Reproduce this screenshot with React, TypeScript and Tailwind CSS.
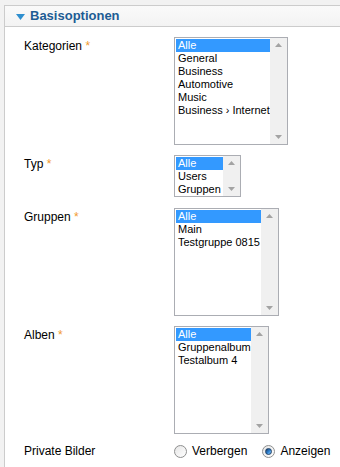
import React from 'react';

type ListProps = {
  items: string[];
  width: string;
  height: string;
};

function ListBox({ items, width, height }: ListProps) {
  return (
    <div className={`flex border border-[#abadb3] bg-white ${width} ${height}`}>
      <div className="flex-1 pt-px pl-px text-[11px] leading-[13px] text-black">
        {items.map((item, i) => (
          <div
            key={item}
            className={`pl-[2px] h-[13px] whitespace-nowrap ${i === 0 ? 'bg-[#3399ff] text-white' : ''}`}
          >
            {item}
          </div>
        ))}
      </div>
      {/* Scrollbar */}
      <div className="w-[17px] bg-[#f0f0f0] flex flex-col justify-between items-center py-[5px]">
        <svg width="7" height="4" viewBox="0 0 7 4">
          <path d="M3.5 0 L7 4 L0 4 Z" fill="#a3a3a3" />
        </svg>
        <svg width="7" height="4" viewBox="0 0 7 4">
          <path d="M0 0 L7 0 L3.5 4 Z" fill="#a3a3a3" />
        </svg>
      </div>
    </div>
  );
}

function Radio({ checked }: { checked?: boolean }) {
  return (
    <span className="w-[13px] h-[13px] rounded-full border border-[#8e8f8f] bg-gradient-to-br from-[#e6e6e6] to-[#ffffff] flex items-center justify-center">
      {checked && (
        <span className="w-[7px] h-[7px] rounded-full bg-gradient-to-br from-[#1e3a5c] via-[#2b7fd0] to-[#8fd0ff] border border-[#1b3f66]" />
      )}
    </span>
  );
}

function Label({ text }: { text: string }) {
  return (
    <div className="w-[169px] shrink-0 pl-[19px] text-[12px] leading-[16px] text-black pt-px">
      {text} <span className="text-[#f29a2e]">*</span>
    </div>
  );
}

export default function App() {
  return (
    <div className="w-[340px] h-[467px] overflow-hidden bg-[#f2f2f2] pt-[5px] pl-[4px] font-['Liberation_Sans',Arial,sans-serif]">
      <div className="w-[360px] h-[480px] bg-white border-l border-t border-[#cccccc]">
        {/* Header */}
        <div className="h-[21px] flex items-center border-b border-[#cccccc] bg-gradient-to-b from-[#fafafa] to-[#f3f3f3] pl-[11px]">
          <svg width="9" height="6" viewBox="0 0 9 6" className="mr-[5px] mt-px">
            <path d="M0 0 L9 0 L4.5 6 Z" fill="#2f8fcf" />
          </svg>
          <span className="text-[13px] font-bold text-[#1d5c94]">Basisoptionen</span>
        </div>

        <div className="pt-[10px] flex flex-col">
          <div className="flex">
            <Label text="Kategorien" />
            <ListBox
              items={['Alle', 'General', 'Business', 'Automotive', 'Music', 'Business › Internet']}
              width="w-[114px]"
              height="h-[108px]"
            />
          </div>

          <div className="flex mt-[10px]">
            <Label text="Typ" />
            <ListBox items={['Alle', 'Users', 'Gruppen']} width="w-[67px]" height="h-[42px]" />
          </div>

          <div className="flex mt-[11px]">
            <Label text="Gruppen" />
            <ListBox items={['Alle', 'Main', 'Testgruppe 0815']} width="w-[105px]" height="h-[108px]" />
          </div>

          <div className="flex mt-[10px]">
            <Label text="Alben" />
            <ListBox items={['Alle', 'Gruppenalbum', 'Testalbum 4']} width="w-[95px]" height="h-[108px]" />
          </div>

          <div className="flex items-center mt-[9px] h-[16px]">
            <div className="w-[169px] shrink-0 pl-[19px] text-[12px] leading-[16px] text-black">Private Bilder</div>
            <label className="flex items-center gap-[5px] text-[12px] text-black">
              <Radio />
              Verbergen
            </label>
            <label className="flex items-center gap-[5px] text-[12px] text-black ml-[15px]">
              <Radio checked />
              Anzeigen
            </label>
          </div>
        </div>
      </div>
    </div>
  );
}
